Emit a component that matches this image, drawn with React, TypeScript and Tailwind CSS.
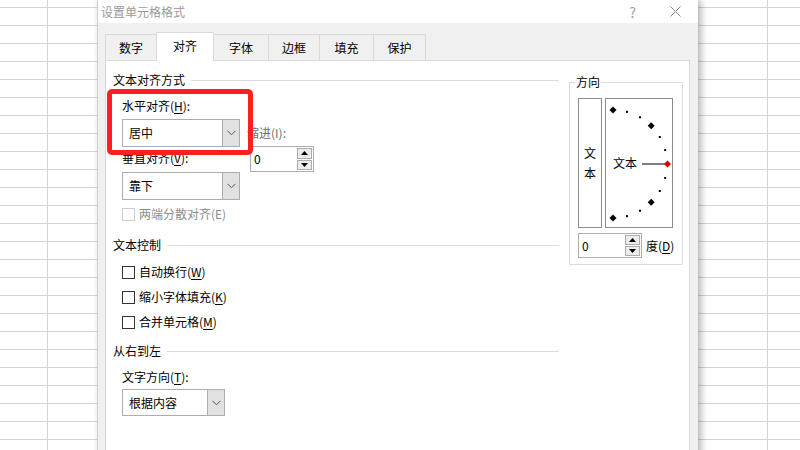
import React from "react";

const Chevron = () => (
  <svg width="9" height="6" viewBox="0 0 9 6">
    <path d="M0.5 0.8 L4.5 4.8 L8.5 0.8" fill="none" stroke="#555" strokeWidth="1" />
  </svg>
);

const SpinButtons = () => (
  <div className="flex w-[17px] flex-col gap-px p-px">
    <div className="flex flex-1 items-center justify-center border border-[#adadad] bg-[#ececec]">
      <svg width="7" height="4" viewBox="0 0 7 4">
        <path d="M3.5 0 L7 4 L0 4 Z" fill="#000" />
      </svg>
    </div>
    <div className="flex flex-1 items-center justify-center border border-[#adadad] bg-[#ececec]">
      <svg width="7" height="4" viewBox="0 0 7 4">
        <path d="M0 0 L7 0 L3.5 4 Z" fill="#000" />
      </svg>
    </div>
  </div>
);

const Checkbox = ({ label, disabled }: { label: React.ReactNode; disabled?: boolean }) => (
  <div className="flex h-[16px] items-center">
    <div
      className={
        disabled
          ? "h-[13px] w-[13px] border border-[#cccccc] bg-white"
          : "h-[13px] w-[13px] border border-[#333333] bg-white"
      }
    />
    <span className={disabled ? "ml-[4px] text-[#8c8c8c]" : "ml-[4px] text-[#000]"}>{label}</span>
  </div>
);

const GroupHeader = ({ text }: { text: string }) => (
  <div className="flex h-[16px] items-center">
    <span className="whitespace-nowrap">{text}</span>
    <div className="ml-[6px] h-px flex-1 bg-[#dcdcdc]" />
  </div>
);

const U = ({ c }: { c: string }) => <span className="underline underline-offset-2">{c}</span>;

function Dial() {
  const cx = 7;
  const cy = 65;
  const r = 54;
  const big = [90, 45, -45, -90];
  const small = [75, 60, 30, 15, -15, -30, -60, -75];
  const pt = (a: number) => {
    const rad = (a * Math.PI) / 180;
    return [cx + r * Math.cos(rad), cy - r * Math.sin(rad)];
  };
  const diamond = (x: number, y: number, s: number) =>
    `M${x} ${y - s} L${x + s} ${y} L${x} ${y + s} L${x - s} ${y} Z`;
  return (
    <svg width="66" height="128" viewBox="0 0 66 128">
      {big.map((a) => {
        const [x, y] = pt(a);
        return <path key={a} d={diamond(x, y, 3.5)} fill="#000" />;
      })}
      {small.map((a) => {
        const [x, y] = pt(a);
        return <rect key={a} x={x - 1} y={y - 1} width="2" height="2" fill="#000" />;
      })}
      <line x1="36" y1={cy} x2="59" y2={cy} stroke="#000" strokeWidth="1" />
      <path d={diamond(61.5, cy, 3.5)} fill="#e00000" />
      <text x="7" y={cy + 4} fontSize="12" fill="#000" fontFamily="'Noto Sans CJK SC', sans-serif">
        文本
      </text>
    </svg>
  );
}

export default function App() {
  return (
    <div className="relative h-[450px] w-[800px] overflow-hidden bg-white bg-[linear-gradient(to_bottom,#d4d4d4_1px,transparent_1px),linear-gradient(to_right,#d4d4d4_1px,transparent_1px)] bg-size-[72px_18px] bg-position-[47px_7px] font-['Noto_Sans_CJK_SC','Microsoft_YaHei',sans-serif] text-[12px] leading-[16px] text-black">
      {/* dialog window */}
      <div className="absolute left-[97px] top-0 flex h-[470px] w-[601px] flex-col border-l border-[#cfcfcf] bg-[#f0f0f0] shadow-[3px_0_7px_rgba(0,0,0,0.3)]">
        {/* title bar */}
        <div className="flex h-[23px] items-center bg-white">
          <span className="ml-[3px] text-[#9a9a9a]">设置单元格格式</span>
          <span className="ml-auto text-[14px] text-[#a0a0a0]">?</span>
          <svg className="ml-[34px] mr-[17px]" width="11" height="11" viewBox="0 0 11 11">
            <path d="M0.5 0.5 L10.5 10.5 M10.5 0.5 L0.5 10.5" stroke="#8a8a8a" strokeWidth="1" />
          </svg>
        </div>
        {/* tabs */}
        <div className="ml-[7px] mt-[9px] flex items-end">
          <div className="flex h-[26px] w-[52px] items-center justify-center border border-b-0 border-[#d9d9d9]">数字</div>
          <div className="relative z-10 -mb-px -ml-px flex h-[29px] w-[58px] items-center justify-center border border-b-0 border-[#d9d9d9] bg-white pb-[2px]">对齐</div>
          <div className="-ml-px flex h-[26px] w-[56px] items-center justify-center border border-b-0 border-[#d9d9d9]">字体</div>
          <div className="-ml-px flex h-[26px] w-[52px] items-center justify-center border border-b-0 border-[#d9d9d9]">边框</div>
          <div className="-ml-px flex h-[26px] w-[55px] items-center justify-center border border-b-0 border-[#d9d9d9]">填充</div>
          <div className="-ml-px flex h-[26px] w-[53px] items-center justify-center border border-b-0 border-[#d9d9d9]">保护</div>
        </div>
        {/* panel */}
        <div className="ml-[7px] flex w-[585px] flex-1 border border-[#d9d9d9] bg-white pl-[7px] pt-[11px]">
          {/* left section */}
          <div className="flex w-[446px] flex-col">
            <GroupHeader text="文本对齐方式" />
            <div className="flex flex-col pl-[9px]">
              <div className="mt-[10px] flex">
                <div className="flex w-[118px] flex-col">
                  <div className="h-[16px]">
                    水平对齐(<U c="H" />):
                  </div>
                  <div className="mt-[5px] flex h-[28px] w-[118px] border border-[#adadad] bg-white">
                    <div className="flex flex-1 items-center pl-[6px]">居中</div>
                    <div className="flex w-[17px] items-center justify-center border-l border-[#adadad] bg-[#e1e1e1]">
                      <Chevron />
                    </div>
                  </div>
                  <div className="mt-[3px] h-[16px]">
                    垂直对齐(<U c="V" />):
                  </div>
                  <div className="mt-[6px] flex h-[28px] w-[118px] border border-[#adadad] bg-white">
                    <div className="flex flex-1 items-center pl-[6px]">靠下</div>
                    <div className="flex w-[17px] items-center justify-center border-l border-[#adadad] bg-[#e1e1e1]">
                      <Chevron />
                    </div>
                  </div>
                </div>
                <div className="ml-[10px] flex flex-col pt-[27px]">
                  <div className="-ml-[3px] h-[16px] text-[#6e6e6e]">缩进(I):</div>
                  <div className="mt-[5px] flex h-[26px] w-[64px] border border-[#adadad] bg-white">
                    <div className="flex flex-1 items-center pl-[3px]">0</div>
                    <SpinButtons />
                  </div>
                </div>
              </div>
              <div className="mt-[6px]">
                <Checkbox disabled label="两端分散对齐(E)" />
              </div>
            </div>
            <div className="mt-[15px]">
              <GroupHeader text="文本控制" />
            </div>
            <div className="mt-[11px] flex flex-col gap-[9px] pl-[9px]">
              <Checkbox label={<>自动换行(<U c="W" />)</>} />
              <Checkbox label={<>缩小字体填充(<U c="K" />)</>} />
              <Checkbox label={<>合并单元格(<U c="M" />)</>} />
            </div>
            <div className="mt-[13px]">
              <GroupHeader text="从右到左" />
            </div>
            <div className="flex flex-col pl-[9px]">
              <div className="mt-[10px] h-[16px]">
                文字方向(<U c="T" />):
              </div>
              <div className="mt-[4px] flex h-[27px] w-[103px] border border-[#adadad] bg-white">
                <div className="flex flex-1 items-center pl-[6px]">根据内容</div>
                <div className="flex w-[17px] items-center justify-center border-l border-[#adadad] bg-[#e1e1e1]">
                  <Chevron />
                </div>
              </div>
            </div>
          </div>
          {/* direction group */}
          <div className="relative ml-[10px] mt-[10px] h-[183px] w-[114px] border border-[#dcdcdc]">
            <span className="absolute -top-[9px] left-[5px] bg-white px-px">方向</span>
            <div className="ml-[8px] mt-[15px] flex">
              <div className="flex h-[130px] w-[24px] flex-col items-center justify-center border border-[#8c8c8c]">
                <span>文</span>
                <span className="mt-[4px]">本</span>
              </div>
              <div className="ml-[3px] h-[130px] w-[68px] border border-[#8c8c8c]">
                <Dial />
              </div>
            </div>
            <div className="ml-[8px] mt-[5px] flex items-center">
              <div className="flex h-[25px] w-[64px] border border-[#adadad] bg-white">
                <div className="flex flex-1 items-center pl-[3px]">0</div>
                <SpinButtons />
              </div>
              <span className="ml-[4px]">
                度(<U c="D" />)
              </span>
            </div>
          </div>
        </div>
      </div>
      {/* red highlight annotation */}
      <div className="absolute left-[107px] top-[89px] h-[66px] w-[146px] rounded-[5px] border-[5px] border-[#ff1f1f]" />
    </div>
  );
}
